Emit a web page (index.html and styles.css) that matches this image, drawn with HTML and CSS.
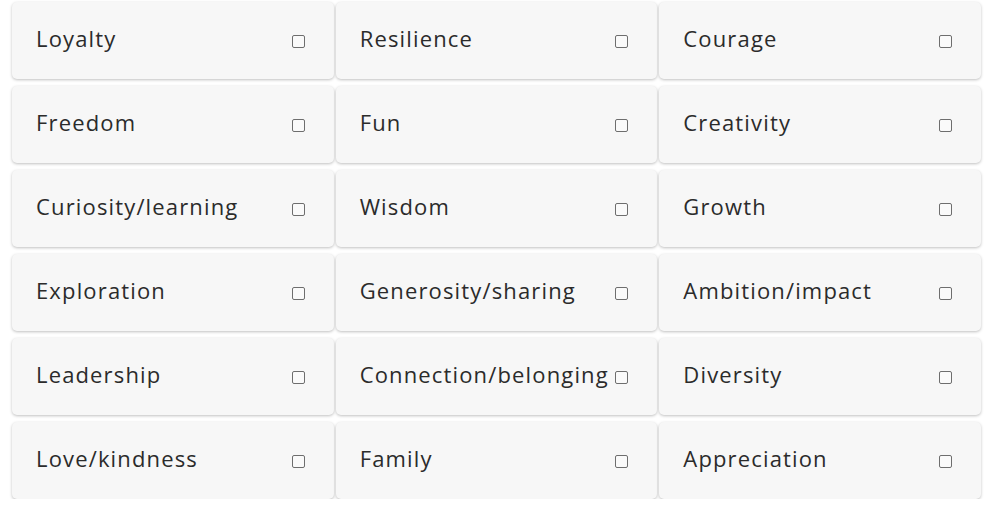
FILE: index.html
```html
<!DOCTYPE html>
<html>
<head>
<meta charset="utf-8">
<link rel="stylesheet" href="styles.css">
</head>
<body>
<div class="grid">
  <label class="card"><span class="name">Loyalty</span><span class="box"></span></label>
  <label class="card"><span class="name">Resilience</span><span class="box"></span></label>
  <label class="card"><span class="name">Courage</span><span class="box"></span></label>
  <label class="card"><span class="name">Freedom</span><span class="box"></span></label>
  <label class="card"><span class="name">Fun</span><span class="box"></span></label>
  <label class="card"><span class="name">Creativity</span><span class="box"></span></label>
  <label class="card"><span class="name">Curiosity/learning</span><span class="box"></span></label>
  <label class="card"><span class="name">Wisdom</span><span class="box"></span></label>
  <label class="card"><span class="name">Growth</span><span class="box"></span></label>
  <label class="card"><span class="name">Exploration</span><span class="box"></span></label>
  <label class="card"><span class="name">Generosity/sharing</span><span class="box"></span></label>
  <label class="card"><span class="name">Ambition/impact</span><span class="box"></span></label>
  <label class="card"><span class="name">Leadership</span><span class="box"></span></label>
  <label class="card"><span class="name">Connection/belonging</span><span class="box"></span></label>
  <label class="card"><span class="name">Diversity</span><span class="box"></span></label>
  <label class="card"><span class="name">Love/kindness</span><span class="box"></span></label>
  <label class="card"><span class="name">Family</span><span class="box"></span></label>
  <label class="card"><span class="name">Appreciation</span><span class="box"></span></label>
</div>
</body>
</html>
```
FILE: styles.css
```css
html, body {
  margin: 0;
  padding: 0;
  background: #ffffff;
}
body {
  font-family: "Open Sans", "Liberation Sans", sans-serif;
}
.grid {
  display: grid;
  grid-template-columns: repeat(3, 1fr);
  grid-auto-rows: 77px;
  column-gap: 2px;
  row-gap: 7px;
  padding: 2px 19px 0 12px;
}
.card {
  display: flex;
  align-items: flex-start;
  justify-content: space-between;
  background: #f7f7f7;
  border-radius: 5px;
  box-shadow: 0 1px 3px rgba(0, 0, 0, 0.25);
  padding: 20px 29px 0 24px;
  box-sizing: border-box;
}
.name {
  font-size: 22px;
  line-height: 32px;
  color: #2b2b2b;
  letter-spacing: 1.15px;
  white-space: nowrap;
}
.box {
  flex: none;
  width: 13px;
  height: 13px;
  margin-top: 13px;
  border: 1.5px solid #6e6e6e;
  border-radius: 2px;
  box-sizing: border-box;
  background: #fafafa;
}
```
